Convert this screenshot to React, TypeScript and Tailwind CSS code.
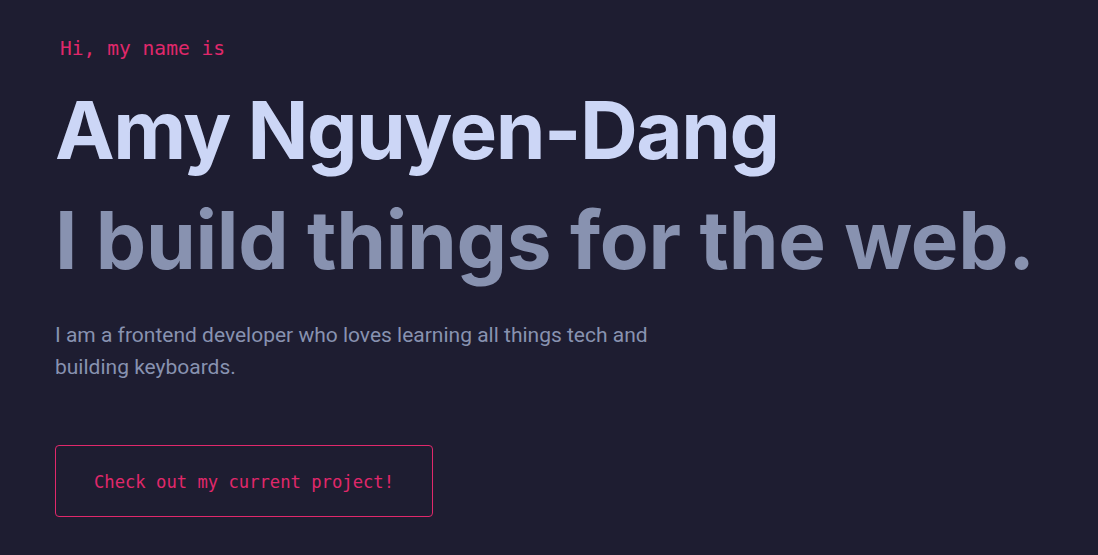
export default function App() {
  return (
    <main className="min-h-screen w-full bg-[#1e1d31] overflow-hidden">
      <section className="flex flex-col items-start pl-[55px] pt-[34px]">
        {/* Intro */}
        <h1 className="ml-[5px] text-[19.6px] leading-[30px] text-[#e0286b] font-['DejaVu_Sans_Mono',monospace]">
          Hi, my name is
        </h1>

        {/* Name + tagline */}
        <h2 className="mt-[11px] text-[80px] leading-[110px] font-bold tracking-[-1.5px] text-[#ccd6f6] font-['Inter',sans-serif]">
          Amy Nguyen-Dang
        </h2>
        <h3 className="text-[80px] leading-[110px] font-bold tracking-[-0.3px] text-[#8892b0] font-['Inter',sans-serif]">
          I build things for the web.
        </h3>

        {/* Blurb */}
        <p className="mt-[24px] max-w-[640px] text-[21px] leading-[32px] text-[#8892b0] font-['Roboto',sans-serif]">
          I am a frontend developer who loves learning all things tech and
          building keyboards.
        </p>

        {/* CTA */}
        <button className="mt-[62px] w-[378px] h-[72px] pt-[3px] flex items-center justify-center rounded border border-[#e0286b] text-[17.2px] text-[#e0286b] font-['DejaVu_Sans_Mono',monospace]">
          Check out my current project!
        </button>
      </section>
    </main>
  );
}
